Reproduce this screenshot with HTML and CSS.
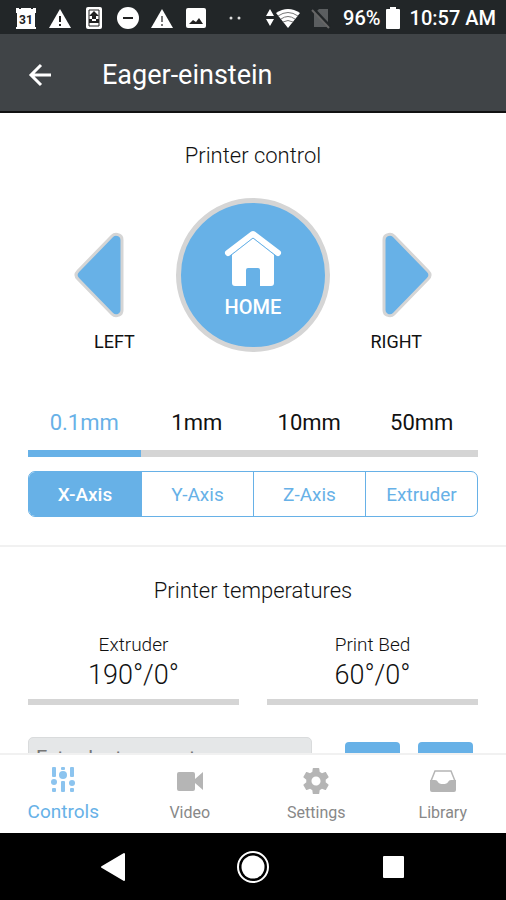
FILE: index.html
```html
<!DOCTYPE html>
<html lang="en">
<head>
    <meta charset="UTF-8">
    <meta name="viewport" content="width=device-width, initial-scale=1.0">
    <title>Eager-einstein</title>
    <link rel="stylesheet" href="styles.css">
</head>
<body>
    <div class="status-bar">
        <div class="status-left">
            <svg width="24" height="24" viewBox="0 0 24 24"><path fill="#fff" d="M2 2h3v1h2V2h10v1h2V2h3v5h-1v14h1v2H2v-2h1V7H2z"/><text class="cal-day" x="12" y="18">31</text></svg>
            <svg width="24" height="24" viewBox="0 0 24 24"><path fill="#fff" d="M12 3L1 22h22z"/><path stroke="#222" stroke-width="2" d="M12 10v6M12 18v2"/></svg>
            <svg width="24" height="24" viewBox="0 0 24 24"><rect x="4" y="1" width="16" height="22" rx="2" fill="#fff"/><path fill="none" stroke="#222" stroke-width="1" d="M7 4h10v16H7z"/><path fill="#222" d="M12 5l5 5h-3v3h3v4H7v-4h3v-3H7z"/><path fill="#fff" d="M10 13h4v2h-4z"/></svg>
            <svg width="24" height="24" viewBox="0 0 24 24"><circle cx="12" cy="12" r="11" fill="#fff"/><path stroke="#222" stroke-width="2" d="M7 12h10"/></svg>
            <svg width="24" height="24" viewBox="0 0 24 24"><path fill="#fff" d="M12 3L1 22h22z"/><path stroke="#777" stroke-width="2" d="M12 10v6M12 18v2"/></svg>
            <svg width="24" height="24" viewBox="0 0 24 24"><rect x="2" y="2" width="20" height="20" rx="2" fill="#fff"/><path fill="#222" d="M5 18l4-4 3 2 3-4 4 6z"/></svg>
            <svg class="dots" width="24" height="24" viewBox="0 0 24 24"><circle cx="7" cy="12" r="1.5" fill="#ddd"/><circle cx="15" cy="12" r="1.5" fill="#ddd"/></svg>
        </div>
        <div class="status-right">
            <svg width="36" height="24" viewBox="0 0 36 24"><path fill="#fff" d="M5 3l4 7H1zM5 20l-4-7h8z"/><path fill="#fff" d="M11 7Q23-1 35 7L23 22z"/><path fill="none" stroke="#777" stroke-width="1" d="M13 10q10-7 20 0M16 13q7-5 14 0M18 16q5-3 10 0"/></svg>
            <svg class="sim" width="20" height="24" viewBox="0 0 20 24"><path fill="#5b5e60" d="M8 3h9v18H3V8z"/><path stroke="#222628" stroke-width="4" d="M2 3l17 18"/><path stroke="#666" stroke-width="2" d="M1 4l17 18"/></svg>
            <span>96%</span>
            <svg class="battery" width="14" height="24" viewBox="0 0 14 24"><path fill="#fff" d="M4 1h6v2h3q1 0 1 1v18q0 1-1 1H1q-1 0-1-1V4q0-1 1-1h3z"/></svg>
            <span>10:57 AM</span>
        </div>
    </div>

    <header class="app-bar">
        <button class="back" aria-label="Back">
            <svg width="24" height="24" viewBox="0 0 24 24"><path fill="none" stroke="#fff" stroke-width="3" d="M23 12H3M13 2L3 12l10 10"/></svg>
        </button>
        <h1>Eager-einstein</h1>
    </header>

    <main class="content">
        <section class="control">
            <h2>Printer control</h2>
            <div class="move">
                <button class="arrow">
                    <svg width="50" height="86" viewBox="0 0 50 86"><path fill="#67b1e7" stroke="#d5d5d5" stroke-width="3" stroke-linejoin="round" d="M38 4Q41 1 45 3Q48 4 48 8V78Q48 82 45 83Q41 85 38 82L4 47Q0 43 4 39z"/></svg>
                    <span>LEFT</span>
                </button>
                <button class="home">
                    <svg width="58" height="58" viewBox="0 0 58 58"><path fill="none" stroke="#fff" stroke-width="6" stroke-linejoin="round" stroke-linecap="round" d="M4 24L29 5l25 19"/><path fill="#fff" d="M29 9l21 16v29q0 3-3 3H36V41q0-2-2-2H24q-2 0-2 2v16H11q-3 0-3-3V25z"/><path fill="none" stroke="#67b1e7" stroke-width="1" d="M6 27L29 9l23 18"/></svg>
                    <span>HOME</span>
                </button>
                <button class="arrow arrow-right">
                    <svg width="50" height="86" viewBox="0 0 50 86"><path fill="#67b1e7" stroke="#d5d5d5" stroke-width="3" stroke-linejoin="round" d="M12 4Q9 1 5 3Q2 4 2 8V78Q2 82 5 83Q9 85 12 82L46 47Q50 43 46 39z"/></svg>
                    <span>RIGHT</span>
                </button>
            </div>
            <div class="steps">
                <button class="active">0.1mm</button>
                <button>1mm</button>
                <button>10mm</button>
                <button>50mm</button>
            </div>
            <div class="axes">
                <button class="active">X-Axis</button>
                <button>Y-Axis</button>
                <button>Z-Axis</button>
                <button>Extruder</button>
            </div>
        </section>

        <section class="temperatures">
            <h2>Printer temperatures</h2>
            <div class="temps">
                <div class="temp">
                    <span class="temp-name">Extruder</span>
                    <span class="temp-value">190°/0°</span>
                </div>
                <div class="temp">
                    <span class="temp-name">Print Bed</span>
                    <span class="temp-value">60°/0°</span>
                </div>
            </div>
            <form class="temp-form">
                <input type="text" placeholder="Extruder temperature" aria-label="Extruder temperature">
                <button type="button" aria-label="Set"></button>
                <button type="button" aria-label="Off"></button>
            </form>
        </section>
    </main>

    <nav class="tabs">
        <a href="#" class="active">
            <svg width="26" height="26" viewBox="0 0 26 26"><g fill="#8cc4ef"><rect x="2" y="0" width="4" height="10" rx="1"/><circle cx="4" cy="15" r="3"/><rect x="2" y="21" width="4" height="4" rx="1"/><rect x="11" y="0" width="4" height="3" rx="1"/><circle cx="13" cy="8" r="4"/><rect x="11" y="14" width="4" height="11" rx="1"/><rect x="20" y="0" width="4" height="10" rx="1"/><circle cx="22" cy="16" r="3"/><rect x="20" y="21" width="4" height="4" rx="1"/></g></svg>
            <span>Controls</span>
        </a>
        <a href="#">
            <svg width="26" height="26" viewBox="0 0 26 26"><path fill="#b5b5b5" d="M2 4h14q2 0 2 2v5l8-7v18l-8-7v6q0 2-2 2H2q-2 0-2-2V6q0-2 2-2z"/></svg>
            <span>Video</span>
        </a>
        <a href="#">
            <svg width="26" height="26" viewBox="2 2 20 20"><path fill="#b5b5b5" d="M19.43 12.98c.04-.32.07-.64.07-.98s-.03-.66-.07-.98l2.11-1.65c.19-.15.24-.42.12-.64l-2-3.46c-.12-.22-.39-.3-.61-.22l-2.49 1c-.52-.4-1.08-.73-1.69-.98l-.38-2.65C14.46 2.18 14.25 2 14 2h-4c-.25 0-.46.18-.49.42l-.38 2.65c-.61.25-1.17.59-1.69.98l-2.49-1c-.23-.09-.49 0-.61.22l-2 3.46c-.13.22-.07.49.12.64l2.11 1.65c-.04.32-.07.65-.07.98s.03.66.07.98l-2.11 1.65c-.19.15-.24.42-.12.64l2 3.46c.12.22.39.3.61.22l2.49-1c.52.4 1.08.73 1.69.98l.38 2.65c.03.24.24.42.49.42h4c.25 0 .46-.18.49-.42l.38-2.65c.61-.25 1.17-.59 1.69-.98l2.49 1c.23.09.49 0 .61-.22l2-3.46c.12-.22.07-.49-.12-.64l-2.11-1.65zM12 15.5c-1.93 0-3.5-1.57-3.5-3.5s1.57-3.5 3.5-3.5 3.5 1.57 3.5 3.5-1.57 3.5-3.5 3.5z"/></svg>
            <span>Settings</span>
        </a>
        <a href="#">
            <svg width="26" height="26" viewBox="0 0 26 26"><path fill="none" stroke="#b5b5b5" stroke-width="1.5" d="M1 13L5 3h16l4 10"/><path fill="#b5b5b5" d="M0 12h5q2 0 3 2 1 2 5 2t5-2q1-2 3-2h5v10q0 2-2 2H2q-2 0-2-2z"/></svg>
            <span>Library</span>
        </a>
    </nav>

    <div class="system-nav">
        <button aria-label="System back"><svg width="32" height="32" viewBox="0 0 32 32"><path fill="#fff" stroke="#fff" stroke-width="2" stroke-linejoin="round" d="M5 16L27 3v26z"/></svg></button>
        <button aria-label="System home"><svg width="32" height="32" viewBox="0 0 32 32"><circle cx="16" cy="16" r="15" fill="none" stroke="#fff" stroke-width="2"/><circle cx="16" cy="16" r="11.5" fill="#fff"/></svg></button>
        <button aria-label="Recent apps"><svg width="32" height="32" viewBox="0 0 32 32"><rect x="6" y="5" width="21" height="22" rx="1" fill="#fff"/></svg></button>
    </div>
</body>
</html>
```
FILE: styles.css
```css
* {
    box-sizing: border-box;
}

body {
    margin: 0;
    height: 100vh;
    display: flex;
    flex-direction: column;
    overflow: hidden;
    background-color: #fff;
    color: #111;
    font-family: Roboto, "Liberation Sans", sans-serif;
}

button {
    margin: 0;
    padding: 0;
    border: none;
    background: none;
    font-family: inherit;
    color: inherit;
    cursor: pointer;
}

svg {
    display: block;
    flex-shrink: 0;
}

h1, h2 {
    margin: 0;
    font-weight: 400;
}

/* Status bar */
.status-bar {
    flex-shrink: 0;
    height: 34px;
    padding: 2px 10px 0 14px;
    display: flex;
    justify-content: space-between;
    align-items: center;
    background-color: #222628;
    color: #fff;
    font-size: 20px;
    font-weight: 500;
}

.status-left {
    display: flex;
    gap: 10px;
}

.status-right {
    display: flex;
    align-items: center;
}

.dots {
    margin-left: 6px;
}

.sim {
    margin: 0 12px 0 10px;
}

.battery {
    margin: 0 10px 0 5px;
}

.cal-day {
    font-family: Roboto, sans-serif;
    font-size: 12px;
    font-weight: 700;
    text-anchor: middle;
    fill: #222;
}

/* App bar */
.app-bar {
    flex-shrink: 0;
    height: 79px;
    padding: 4px 28px 0;
    display: flex;
    align-items: center;
    gap: 50px;
    background-color: #404447;
    border-bottom: 2px solid #111;
    color: #fff;
}

.app-bar h1 {
    font-size: 27px;
    line-height: 32px;
}

/* Content */
.content {
    flex: 1;
    min-height: 0;
    overflow: hidden;
}

.content h2 {
    font-size: 22px;
    font-weight: 300;
    line-height: 28px;
    text-align: center;
}

.control {
    padding: 29px 28px 28px;
    border-bottom: 2px solid #f1f1f1;
}

.move {
    display: grid;
    grid-template-columns: 1fr auto 1fr;
    align-items: end;
    padding: 0 46px;
    margin-top: 28px;
}

.arrow {
    display: flex;
    flex-direction: column;
    align-items: flex-start;
    gap: 14px;
    font-size: 18px;
    line-height: 20px;
}

.arrow span {
    margin-left: 20px;
}

.arrow-right {
    align-items: flex-end;
}

.arrow-right span {
    margin: 0 10px 0 0;
}

.home {
    width: 154px;
    height: 154px;
    display: flex;
    flex-direction: column;
    align-items: center;
    justify-content: center;
    gap: 6px;
    border: 5px solid #d5d5d5;
    border-radius: 50%;
    background-color: #67b1e7;
    color: #fff;
    font-size: 20px;
    font-weight: 500;
    line-height: 28px;
}

.steps {
    display: grid;
    grid-template-columns: repeat(4, 1fr);
    margin-top: 55px;
}

.steps button {
    padding-bottom: 11px;
    border-bottom: 7px solid #d5d5d5;
    font-size: 22px;
    line-height: 32px;
}

.steps .active {
    border-color: #67b1e7;
    color: #67b1e7;
}

.axes {
    display: grid;
    grid-template-columns: repeat(4, 1fr);
    margin-top: 14px;
    border: 1px solid #67b1e7;
    border-radius: 7px;
    overflow: hidden;
}

.axes button {
    height: 44px;
    border-left: 1px solid #67b1e7;
    color: #67b1e7;
    font-size: 19px;
}

.axes .active {
    border-left: none;
    background-color: #67b1e7;
    color: #fff;
    font-weight: 500;
}

.temperatures {
    padding: 30px 28px;
}

.temps {
    display: grid;
    grid-template-columns: 1fr 1fr;
    gap: 28px;
    margin-top: 27px;
}

.temp {
    display: flex;
    flex-direction: column;
    align-items: center;
    padding-bottom: 7px;
    border-bottom: 6px solid #d5d5d5;
}

.temp-name {
    font-size: 19px;
    font-weight: 300;
    line-height: 26px;
}

.temp-value {
    font-size: 27px;
    font-weight: 300;
    line-height: 34px;
}

.temp-form {
    display: flex;
    align-items: center;
    margin-top: 32px;
    padding-right: 5px;
}

.temp-form input {
    flex: 1;
    min-width: 0;
    height: 42px;
    margin-right: 15px;
    padding: 0 7px;
    border: 1px solid #d9dbdc;
    border-radius: 5px;
    background-color: #e5e7e8;
    font-family: inherit;
    font-size: 20px;
}

.temp-form button {
    width: 55px;
    height: 32px;
    margin-left: 18px;
    border-radius: 4px;
    background-color: #67b1e7;
}

/* Bottom tabs */
.tabs {
    flex-shrink: 0;
    height: 80px;
    display: grid;
    grid-template-columns: repeat(4, 1fr);
    border-top: 2px solid #f1f1f1;
    background-color: #fff;
}

.tabs a {
    display: flex;
    flex-direction: column;
    align-items: center;
    padding-top: 13px;
    gap: 7px;
    color: #888;
    font-size: 16px;
    line-height: 24px;
    text-decoration: none;
}

.tabs .active {
    padding-top: 12px;
    color: #67b1e7;
    font-size: 19px;
}

.system-nav {
    flex-shrink: 0;
    height: 67px;
    padding: 0 97px;
    display: flex;
    justify-content: space-between;
    align-items: center;
    background-color: #000;
}
```
